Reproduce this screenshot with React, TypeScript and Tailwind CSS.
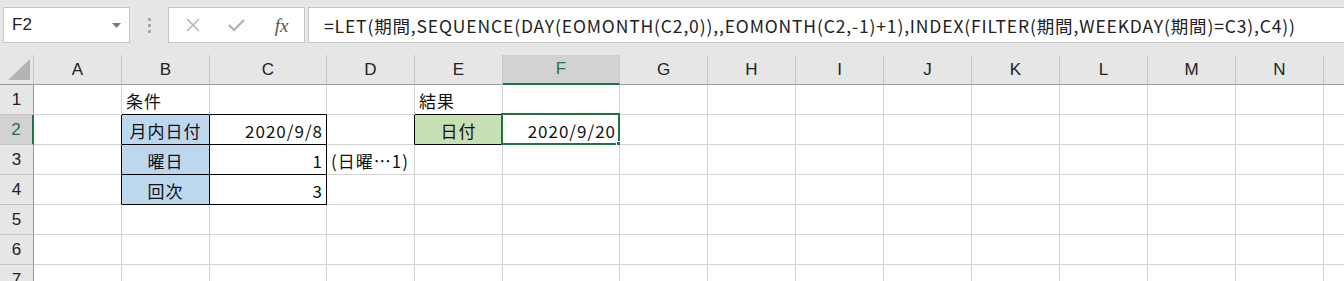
import React from 'react';

type Col = { name: string; w: number };

const COLS: Col[] = [
  { name: 'A', w: 88 },
  { name: 'B', w: 88 },
  { name: 'C', w: 117 },
  { name: 'D', w: 88 },
  { name: 'E', w: 88 },
  { name: 'F', w: 117 },
  { name: 'G', w: 88 },
  { name: 'H', w: 88 },
  { name: 'I', w: 88 },
  { name: 'J', w: 88 },
  { name: 'K', w: 88 },
  { name: 'L', w: 88 },
  { name: 'M', w: 88 },
  { name: 'N', w: 88 },
  { name: 'O', w: 88 },
];

type CellDef = { text: string; align?: 'left' | 'right' | 'center'; bg?: string };

// key = col + row
const CELLS: Record<string, CellDef> = {
  B1: { text: '条件' },
  B2: { text: '月内日付', align: 'center', bg: 'bg-[#bdd7ee]' },
  C2: { text: '2020/9/8', align: 'right' },
  B3: { text: '曜日', align: 'center', bg: 'bg-[#bdd7ee]' },
  C3: { text: '1', align: 'right' },
  D3: { text: '(日曜…1)' },
  B4: { text: '回次', align: 'center', bg: 'bg-[#bdd7ee]' },
  C4: { text: '3', align: 'right' },
  E1: { text: '結果' },
  E2: { text: '日付', align: 'center', bg: 'bg-[#c6e0b4]' },
  F2: { text: '2020/9/20', align: 'right' },
};

// cells with a thin black box around them
const BOXED = new Set(['B2', 'C2', 'B3', 'C3', 'B4', 'C4', 'E2']);

const ROWS = [1, 2, 3, 4, 5, 6, 7];
const FORMULA =
  '=LET(期間,SEQUENCE(DAY(EOMONTH(C2,0)),,EOMONTH(C2,-1)+1),INDEX(FILTER(期間,WEEKDAY(期間)=C3),C4))';

const colAt = (i: number) => COLS[i]?.name ?? '';

const Cell: React.FC<{ ci: number; row: number }> = ({ ci, row }) => {
  const col = COLS[ci];
  const key = col.name + row;
  const def = CELLS[key];
  const rightBlack = BOXED.has(key) || BOXED.has(colAt(ci + 1) + row);
  const bottomBlack = BOXED.has(key) || BOXED.has(col.name + (row + 1));
  const selected = key === 'F2';

  const align =
    def?.align === 'right' ? 'justify-end pr-[3px]' : def?.align === 'center' ? 'justify-center' : 'justify-start pl-[4px]';

  return (
    <div
      className={`relative flex shrink-0 items-center border-r border-b whitespace-nowrap ${align} ${def?.bg ?? 'bg-white'} ${
        rightBlack ? 'border-r-black' : 'border-r-[#d4d4d4]'
      } ${bottomBlack ? 'border-b-black' : 'border-b-[#d4d4d4]'}`}
      style={{ width: col.w }}
    >
      {def && <span className="pt-[1px] text-[17px] leading-none tracking-[1px] text-[#111]">{def.text}</span>}
      {selected && (
        <div className="absolute -left-[2px] -top-[2px] -right-px -bottom-px border-2 border-[#217346]">
          <div className="absolute -right-[5px] -bottom-[5px] h-[7px] w-[7px] border border-white bg-[#217346]" />
        </div>
      )}
    </div>
  );
};

const FormulaBar = () => (
  <div className="flex h-[55px] items-start bg-[#e6e6e6] pt-[7px] pl-[3px]">
    {/* name box */}
    <div className="flex h-[36px] w-[127px] items-center justify-between border border-[#c6c6c6] bg-white pl-[8px] pr-[8px]">
      <span className="font-['Liberation_Sans',sans-serif] text-[17px] text-[#222]">F2</span>
      <svg width="9" height="5" viewBox="0 0 9 5">
        <polygon points="0,0 9,0 4.5,5" fill="#7a7a7a" />
      </svg>
    </div>
    {/* grip dots */}
    <div className="flex h-[36px] w-[38px] flex-col items-center justify-center gap-[3px]">
      <span className="h-[3px] w-[3px] bg-[#a8a8a8]" />
      <span className="h-[3px] w-[3px] bg-[#a8a8a8]" />
      <span className="h-[3px] w-[3px] bg-[#a8a8a8]" />
    </div>
    {/* cancel / enter / fx */}
    <div className="flex h-[36px] w-[137px] items-center border border-[#c6c6c6] bg-white">
      <div className="flex w-[45px] justify-center pl-[2px]">
        <svg width="14" height="14" viewBox="0 0 14 14" stroke="#b4b4b4" strokeWidth="1.6">
          <line x1="1" y1="1" x2="13" y2="13" />
          <line x1="13" y1="1" x2="1" y2="13" />
        </svg>
      </div>
      <div className="flex w-[45px] justify-center">
        <svg width="17" height="14" viewBox="0 0 17 14" fill="none" stroke="#b4b4b4" strokeWidth="2.4">
          <polyline points="1,7 6,12 16,2" />
        </svg>
      </div>
      <div className="flex w-[45px] justify-center">
        <span className="font-['Liberation_Serif',serif] text-[19px] italic leading-none text-[#555]">fx</span>
      </div>
    </div>
    {/* formula */}
    <div className="ml-[3px] flex h-[36px] flex-1 items-center border border-r-0 border-[#c6c6c6] bg-white pl-[15px]">
      <span className="whitespace-nowrap pt-[1px] text-[17.5px] leading-none tracking-[0.85px] text-[#222]">{FORMULA}</span>
    </div>
  </div>
);

export default function App() {
  return (
    <div className="h-[281px] w-[1344px] overflow-hidden bg-white font-['Noto_Sans_CJK_JP','Noto_Sans',sans-serif]">
      <FormulaBar />

      {/* column headers */}
      <div className="flex h-[30px] bg-[#e6e6e6]">
        <div className="flex w-[34px] shrink-0 items-end border-r border-b border-r-[#c6c6c6] border-b-[#9b9b9b] pb-[4px] pl-[8px]">
          <svg width="22" height="21" viewBox="0 0 22 21">
            <polygon points="0,21 22,21 22,0" fill="#b4b4b4" />
          </svg>
        </div>
        {COLS.map((c) => {
          const sel = c.name === 'F';
          return (
            <div
              key={c.name}
              className={`flex shrink-0 items-center justify-center border-r border-r-[#c6c6c6] font-['Liberation_Sans',sans-serif] text-[17px] ${
                sel ? 'border-b-2 border-b-[#217346] bg-[#d2d2d2] text-[#217346]' : 'border-b border-b-[#9b9b9b] text-[#222]'
              }`}
              style={{ width: c.w }}
            >
              {/* column O sits past the window edge, its letter is never seen */}
              {c.name === 'O' ? '' : c.name}
            </div>
          );
        })}
      </div>

      {/* rows */}
      {ROWS.map((r) => {
        const sel = r === 2;
        return (
          <div key={r} className="flex h-[30px]">
            <div
              className={`flex w-[34px] shrink-0 items-center justify-center border-b border-b-[#c6c6c6] font-['Liberation_Sans',sans-serif] text-[17px] ${
                sel ? 'border-r-2 border-r-[#217346] bg-[#d2d2d2] text-[#217346]' : 'border-r border-r-[#9b9b9b] bg-[#e6e6e6] text-[#222]'
              }`}
            >
              {r}
            </div>
            {COLS.map((c, ci) => (
              <Cell key={c.name} ci={ci} row={r} />
            ))}
          </div>
        );
      })}
    </div>
  );
}
